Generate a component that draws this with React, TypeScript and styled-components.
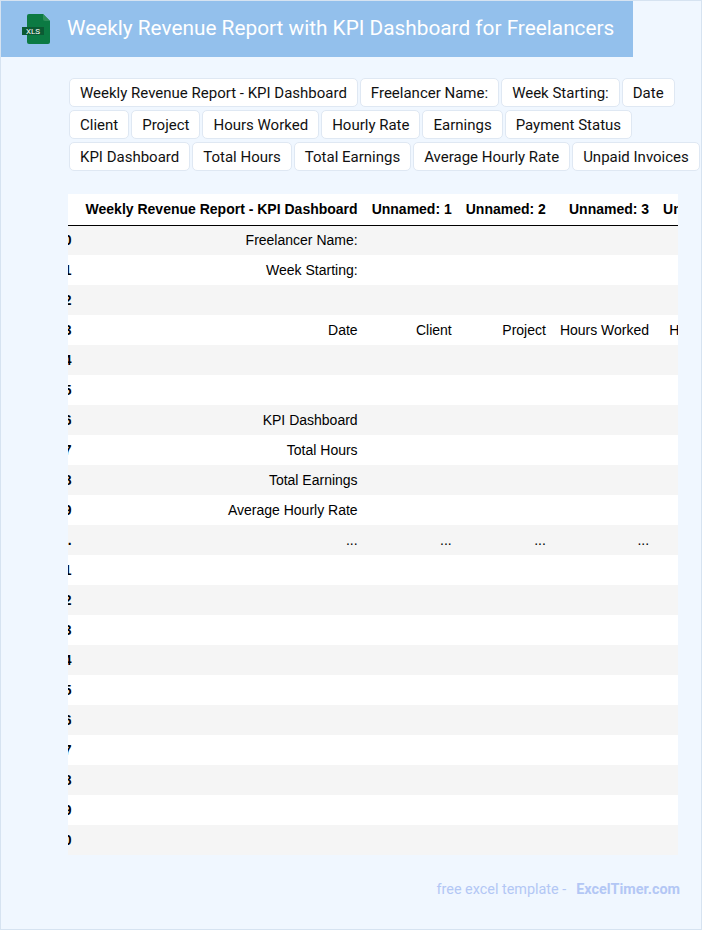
import {useEffect, useRef} from 'react';
import {createGlobalStyle, styled} from 'styled-components';

const chips = [
  'Weekly Revenue Report - KPI Dashboard',
  'Freelancer Name:',
  'Week Starting:',
  'Date',
  'Client',
  'Project',
  'Hours Worked',
  'Hourly Rate',
  'Earnings',
  'Payment Status',
  'KPI Dashboard',
  'Total Hours',
  'Total Earnings',
  'Average Hourly Rate',
  'Unpaid Invoices',
];

const headers = [
  'Weekly Revenue Report - KPI Dashboard',
  'Unnamed: 1',
  'Unnamed: 2',
  'Unnamed: 3',
  'Unnamed: 4',
  'Unnamed: 5',
];

const blank = ['', '', '', '', '', ''];
const rows: {index: string; cells: string[]}[] = [
  {index: '0', cells: ['Freelancer Name:', '', '', '', '', '']},
  {index: '1', cells: ['Week Starting:', '', '', '', '', '']},
  {index: '2', cells: blank},
  {index: '3', cells: ['Date', 'Client', 'Project', 'Hours Worked', 'Hourly Rate', 'Earnings']},
  {index: '4', cells: blank},
  {index: '5', cells: blank},
  {index: '6', cells: ['KPI Dashboard', '', '', '', '', '']},
  {index: '7', cells: ['Total Hours', '', '', '', '', '']},
  {index: '8', cells: ['Total Earnings', '', '', '', '', '']},
  {index: '9', cells: ['Average Hourly Rate', '', '', '', '', '']},
  {index: '...', cells: ['...', '...', '...', '...', '...', '...']},
  ...['21', '22', '23', '24', '25', '26', '27', '28', '29', '30'].map((index) => ({index, cells: blank})),
];

const GlobalStyle = createGlobalStyle`
  html, body {
    margin: 0;
    padding: 0;
  }
`;

const Page = styled.div`
  box-sizing: border-box;
  width: 702px;
  height: 930px;
  overflow: hidden;
  background: #f0f7ff;
  border: 1px solid #d6e3f1;
  font-family: Roboto, sans-serif;
`;

const Banner = styled.header`
  display: flex;
  align-items: center;
  gap: 17px;
  box-sizing: border-box;
  width: 632px;
  height: 56px;
  padding-left: 21px;
  background: #93c0ec;
`;

const Title = styled.h1`
  margin: 0 0 2px;
  color: #fff;
  font-size: 20.8px;
  font-weight: 400;
  white-space: nowrap;
`;

const ChipList = styled.div`
  display: flex;
  flex-wrap: wrap;
  gap: 3px 2px;
  width: 640px;
  margin: 21px 0 0 68px;
`;

const Chip = styled.span`
  box-sizing: border-box;
  height: 29px;
  padding: 0 10px;
  border: 1px solid #dfe8f3;
  border-radius: 5px;
  background: #fff;
  color: #111;
  font-size: 15px;
  line-height: 28px;
  white-space: nowrap;
`;

const TableScroll = styled.div`
  width: 610px;
  margin: 23px 0 0 67px;
  overflow: hidden;
`;

const Table = styled.table`
  border-collapse: collapse;
  border-spacing: 0;
  background: #fff;
  color: #000;
  font-family: 'Liberation Sans', Arial, sans-serif;
  font-size: 14px;
  white-space: nowrap;
`;

const HeadCell = styled.th`
  height: 31px;
  box-sizing: border-box;
  padding: 0 7px;
  border-bottom: 1px solid #000;
  font-weight: 700;
  text-align: right;
`;

const Row = styled.tr<{$shaded: boolean}>`
  height: 30px;
  background: ${({$shaded}) => ($shaded ? '#f5f5f5' : '#fff')};
`;

const IndexCell = styled.th`
  padding: 0 7px;
  font-weight: 700;
  text-align: right;
`;

const Cell = styled.td`
  padding: 0 7px;
  text-align: right;
`;

const Footer = styled.footer`
  display: flex;
  justify-content: flex-end;
  gap: 10px;
  width: 679px;
  margin-top: 26px;
  color: #b3c7f5;
  font-size: 14.4px;
  line-height: 18px;
`;

const SiteName = styled.span`
  font-weight: 700;
`;

function XlsIcon() {
  return (
    <svg width="28" height="30" viewBox="0 0 28 30" aria-hidden="true">
      <path d="M7 0h14l7 7v21a2 2 0 0 1-2 2H7a2 2 0 0 1-2-2V2a2 2 0 0 1 2-2z" fill="#0c7a43" />
      <path d="M21 0l7 7h-5a2 2 0 0 1-2-2z" fill="#2f8f5c" />
      <rect x="0" y="13" width="22" height="8" fill="#0b5a33" />
      <text x="11" y="20" fill="#fff" fontFamily="Roboto, sans-serif" fontSize="8" textAnchor="middle">
        XLS
      </text>
    </svg>
  );
}

export default function App() {
  const scroller = useRef<HTMLDivElement | null>(null);

  // the table sits scrolled sideways, so only the tail of the index shows
  useEffect(() => {
    if (scroller.current) {
      scroller.current.scrollLeft = 19;
    }
  }, []);

  return (
    <Page>
      <GlobalStyle />
      <Banner>
        <XlsIcon />
        <Title>Weekly Revenue Report with KPI Dashboard for Freelancers</Title>
      </Banner>
      <ChipList>
        {chips.map((chip) => (
          <Chip key={chip}>{chip}</Chip>
        ))}
      </ChipList>
      <TableScroll ref={scroller}>
        <Table>
          <thead>
            <tr>
              <HeadCell />
              {headers.map((header) => (
                <HeadCell key={header}>{header}</HeadCell>
              ))}
            </tr>
          </thead>
          <tbody>
            {rows.map((row, i) => (
              <Row key={row.index} $shaded={i % 2 === 0}>
                <IndexCell>{row.index}</IndexCell>
                {row.cells.map((cell, c) => (
                  <Cell key={c}>{cell}</Cell>
                ))}
              </Row>
            ))}
          </tbody>
        </Table>
      </TableScroll>
      <Footer>
        <span>free excel template -</span>
        <SiteName>ExcelTimer.com</SiteName>
      </Footer>
    </Page>
  );
}
